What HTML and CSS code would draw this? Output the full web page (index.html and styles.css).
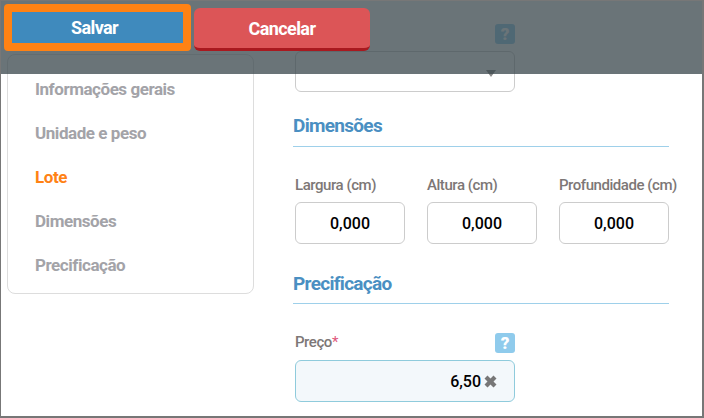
FILE: index.html
```html
<!DOCTYPE html>
<html lang="en">
<head>
  <meta charset="UTF-8" />
  <title>Produto</title>
  <link rel="stylesheet" href="styles.css">
</head>
<body>
  <div class="frame">
    <div class="action-bar">
      <button class="btn btn-save">Salvar</button>
      <button class="btn btn-cancel">Cancelar</button>
    </div>

    <aside class="side-nav">
      <a class="nav-item">Informações gerais</a>
      <a class="nav-item">Unidade e peso</a>
      <a class="nav-item active">Lote</a>
      <a class="nav-item">Dimensões</a>
      <a class="nav-item">Precificação</a>
    </aside>

    <main class="content">
      <div class="field field-wide field-top">
        <div class="field-head">
          <span class="help">?</span>
        </div>
        <div class="select"><span class="caret"></span></div>
      </div>

      <h3 class="section-title">Dimensões</h3>
      <div class="dims">
        <div class="field">
          <label class="field-label">Largura (cm)</label>
          <div class="input">0,000</div>
        </div>
        <div class="field">
          <label class="field-label">Altura (cm)</label>
          <div class="input">0,000</div>
        </div>
        <div class="field">
          <label class="field-label">Profundidade (cm)</label>
          <div class="input">0,000</div>
        </div>
      </div>

      <h3 class="section-title section-price">Precificação</h3>
      <div class="field field-wide">
        <div class="field-head">
          <label class="field-label">Preço<span class="req">*</span></label>
          <span class="help">?</span>
        </div>
        <div class="input input-price">
          6,50
          <svg class="clear" width="13" height="13" viewBox="0 0 13 13">
            <path d="M0.5 3.5 3.5 0.5 6.5 3.5 9.5 0.5 12.5 3.5 9.5 6.5 12.5 9.5 9.5 12.5 6.5 9.5 3.5 12.5 0.5 9.5 3.5 6.5Z" fill="#777"/>
          </svg>
        </div>
      </div>
    </main>
  </div>
</body>
</html>
```

FILE: styles.css
```css
* {
  box-sizing: border-box;
}

body {
  margin: 0;
  font-family: Roboto, sans-serif;
  background: #fff;
}

.frame {
  position: relative;
  display: flex;
  align-items: flex-start;
  width: 704px;
  height: 418px;
  overflow: hidden;
  border: 1px solid #777;
  border-right-width: 2px;
  border-bottom-width: 2px;
  border-left-width: 1px;
  background: #fff;
}

.action-bar {
  position: absolute;
  top: 0;
  left: 0;
  right: 0;
  height: 73px;
  z-index: 2;
  display: flex;
  align-items: flex-start;
  gap: 3px;
  padding: 3px 0 0 3px;
  background: rgba(59, 72, 78, 0.76);
}

.btn {
  font-family: Roboto, sans-serif;
  font-size: 18px;
  font-weight: 700;
  letter-spacing: -0.6px;
  color: #fff;
  cursor: pointer;
}

.btn-save {
  width: 187px;
  height: 47px;
  padding: 0 6px 0 0;
  background: #3f8abd;
  border: 8px solid #ff8214;
  border-radius: 4px;
}

.btn-cancel {
  width: 176px;
  height: 43px;
  margin-top: 4px;
  background: #dc5557;
  border: none;
  border-bottom: 3px solid #a9191f;
  border-radius: 6px;
}

.side-nav {
  flex: none;
  width: 247px;
  height: 240px;
  margin: 53px 0 0 6px;
  padding: 12px 0 0 27px;
  border: 1px solid #ddd;
  border-radius: 8px;
}

.nav-item {
  display: block;
  height: 44px;
  line-height: 44px;
  font-size: 17px;
  font-weight: 700;
  letter-spacing: -0.45px;
  color: #a3a3a8;
}

.nav-item.active {
  color: #ff8214;
}

.content {
  flex: none;
  width: 376px;
  margin-left: 39px;
  padding-top: 23px;
}

.field {
  width: 110px;
}

.field-wide {
  width: 220px;
  margin-left: 2px;
}

.field-head {
  display: flex;
  align-items: center;
  justify-content: space-between;
  height: 20px;
  margin-bottom: 7px;
}

.field-top .field-head {
  justify-content: flex-end;
}

.help {
  width: 20px;
  height: 20px;
  border-radius: 3px;
  background: #8fcbec;
  color: #fff;
  font-size: 17px;
  font-weight: 900;
  line-height: 20px;
  text-align: center;
}

.select {
  display: flex;
  align-items: center;
  justify-content: flex-end;
  height: 41px;
  padding-right: 18px;
  border: 1px solid #ccc;
  border-radius: 6px;
}

.caret {
  width: 0;
  height: 0;
  border-left: 5px solid transparent;
  border-right: 5px solid transparent;
  border-top: 7px solid #888;
  margin-top: 3px;
}

.section-title {
  margin: 22px 0 0;
  height: 33px;
  line-height: 24px;
  font-size: 19px;
  font-weight: 700;
  letter-spacing: -0.7px;
  color: #4a8fc2;
  border-bottom: 1px solid #9ed0ea;
}

.section-price {
  margin-top: 27px;
  line-height: 26px;
}

.dims {
  display: flex;
  gap: 22px;
  margin: 28px 0 0 2px;
}

.field-label {
  display: block;
  height: 20px;
  line-height: 20px;
  font-size: 15px;
  font-weight: 500;
  letter-spacing: -0.45px;
  white-space: nowrap;
  color: #7d7776;
}

.dims .field-label {
  margin-bottom: 7px;
}

.field-head .field-label {
  margin-bottom: 2px;
}

.req {
  color: #e0567c;
  font-weight: 400;
}

.input {
  display: flex;
  align-items: center;
  justify-content: center;
  height: 42px;
  font-size: 16px;
  font-weight: 500;
  color: #000;
  border: 1px solid #ccc;
  border-radius: 6px;
}

.input-price {
  justify-content: flex-end;
  gap: 3px;
  padding-right: 17px;
  background: #f3f8fb;
  border-color: #8fcbdc;
}

.section-price + .field-wide {
  margin-top: 29px;
}
```
